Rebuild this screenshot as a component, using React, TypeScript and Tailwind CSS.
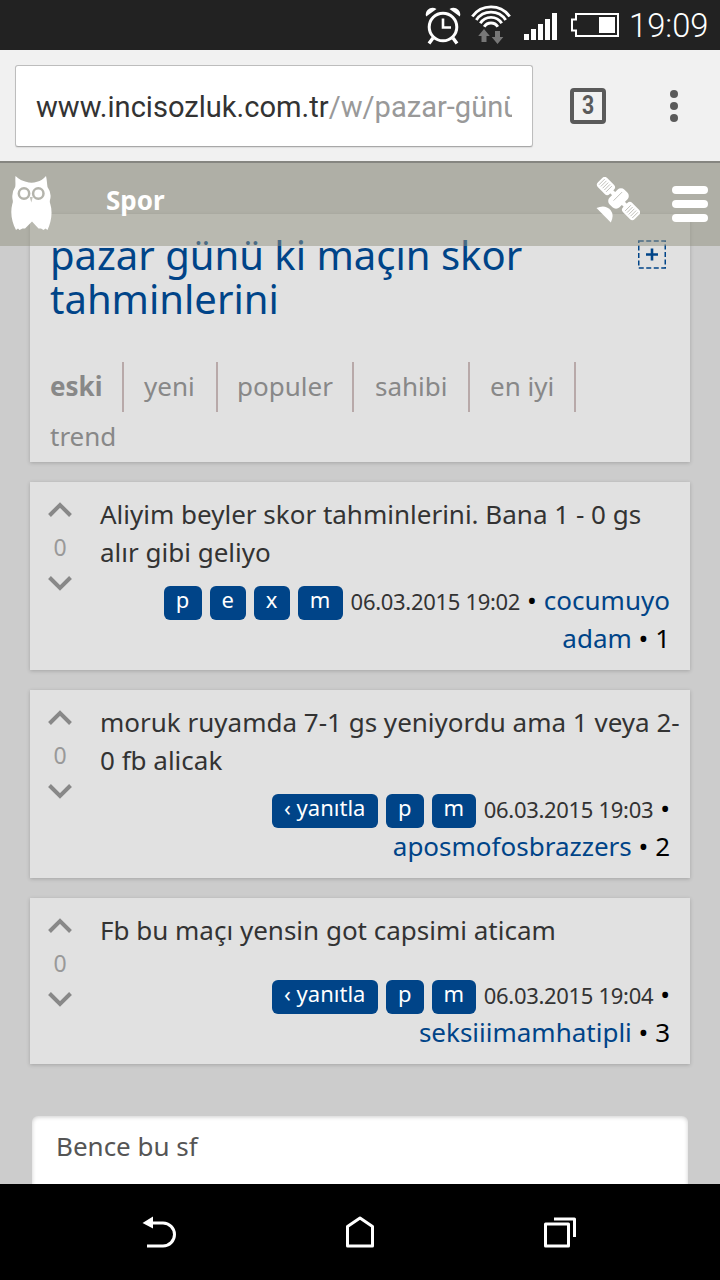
import { ReactNode } from "react";

type Entry = {
  id: number;
  text: ReactNode;
  buttons: { label: string; width: string }[];
  date: string;
  author: string[];
};

const tabs = [
  { label: "eski", style: "w-[74px] font-bold" },
  { label: "yeni", style: "w-[94px] pl-5" },
  { label: "populer", style: "w-[136px] pl-[19px]" },
  { label: "sahibi", style: "w-[116px] pl-[21px]" },
  { label: "en iyi", style: "w-[106px] pl-5" },
];

const entries: Entry[] = [
  {
    id: 1,
    text: (
      <>
        Aliyim beyler skor tahminlerini. Bana 1 - 0 gs
        <br />
        alır gibi geliyo
      </>
    ),
    buttons: [
      { label: "p", width: "w-[38px]" },
      { label: "e", width: "w-9" },
      { label: "x", width: "w-9" },
      { label: "m", width: "w-[45px]" },
    ],
    date: "06.03.2015 19:02",
    author: ["cocumuyo", "adam"],
  },
  {
    id: 2,
    text: (
      <>
        moruk ruyamda 7-1 gs yeniyordu ama 1 veya 2-
        <br />0 fb alicak
      </>
    ),
    buttons: [
      { label: "‹ yanıtla", width: "w-[106px]" },
      { label: "p", width: "w-[38px]" },
      { label: "m", width: "w-11" },
    ],
    date: "06.03.2015 19:03",
    author: ["", "aposmofosbrazzers"],
  },
  {
    id: 3,
    text: "Fb bu maçı yensin got capsimi aticam",
    buttons: [
      { label: "‹ yanıtla", width: "w-[106px]" },
      { label: "p", width: "w-[38px]" },
      { label: "m", width: "w-11" },
    ],
    date: "06.03.2015 19:04",
    author: ["", "seksiiimamhatipli"],
  },
];

function StatusBar() {
  return (
    <div className="flex h-[50px] shrink-0 bg-[#222] pl-[425px] text-white">
      <svg width="36" height="50" viewBox="0 0 36 50" fill="none" stroke="currentColor">
        <circle cx="18" cy="27" r="13.8" strokeWidth="3" />
        <path d="M18 18.5V27.5H26" strokeWidth="2.6" />
        <path d="M8 38L4 43.5M28 38L32 43.5" strokeWidth="3.4" />
        <path d="M1.2 16.5C-1 10.500 6 5 11.500 9Z" fill="currentColor" stroke="none" />
        <path d="M34.8 16.5C37 10.500 30 5 24.500 9Z" fill="currentColor" stroke="none" />
      </svg>
      <svg className="ml-[10px]" width="40" height="50" viewBox="0 0 40 50" fill="none" stroke="currentColor" strokeWidth="2.9">
        <path d="M1.3 16.5A23 23 0 0 1 38.7 16.5" />
        <path d="M5.3 20A17.7 17.7 0 0 1 34.7 20" />
        <path d="M9.3 23.3A12.6 12.6 0 0 1 30.7 23.3" />
        <path d="M13.2 26.8A8 8 0 0 1 26.8 26.8" />
        <path d="M13 29L18.8 36H15.5V42H10.5V36H7.2Z" fill="#777" stroke="none" />
        <path d="M26.5 44L32.3 37H29V31H24V37H20.7Z" fill="#777" stroke="none" />
      </svg>
      <svg className="ml-[13px]" width="33" height="50" viewBox="0 0 33 50" fill="currentColor">
        <path d="M0 34H5V40H0ZM7 29H12V40H7ZM14 24H19V40H14ZM21 19H26V40H21ZM28 13H33V40H28Z" />
      </svg>
      <svg className="ml-[14px]" width="48" height="50" viewBox="0 0 48 50" fill="none" stroke="currentColor" strokeWidth="2">
        <path d="M5 14H47V36H5V30.5H1V19.5H5Z" />
        <path d="M28 17H44V33H28Z" fill="currentColor" stroke="none" />
      </svg>
      <span className="ml-[10px] font-['Roboto',sans-serif] text-[32.7px] leading-[52px] font-light">19:09</span>
    </div>
  );
}

function AddressBar() {
  return (
    <div className="flex h-[113px] shrink-0 items-start border-b-2 border-[#858580] bg-[#f1f1f1] font-['Roboto',sans-serif]">
      <div className="mt-[15px] ml-[15px] h-[82px] w-[518px] rounded-[3px] border border-[#bdbdbd] border-b-[#a8a8a8] bg-white px-5 shadow-[0_1px_1px_#ddd]">
        <p className="w-[476px] overflow-hidden text-[29.1px] leading-[82px] whitespace-nowrap text-[#999]">
          <span className="text-[#333]">www.incisozluk.com.tr</span>/w/pazar-günü
        </p>
      </div>
      <div className="mt-[38px] ml-[37px] flex size-9 items-center justify-center rounded-[4px] border-4 border-[#5a5a5a] text-[25px] font-bold text-[#5a5a5a]">
        <span className="scale-x-85">3</span>
      </div>
      <div className="mt-10 ml-16 flex flex-col gap-1">
        <i className="size-2 rounded-full bg-[#5a5a5a]" />
        <i className="size-2 rounded-full bg-[#5a5a5a]" />
        <i className="size-2 rounded-full bg-[#5a5a5a]" />
      </div>
    </div>
  );
}

function Owl() {
  return (
    <svg width="42" height="56" viewBox="0 0 42 56" fill="#fff">
      <path d="M4.500 1C8 4.500 12 6 15 6.800Q20.500 8.500 26 6.800C29.500 6 32.500 4 35 1C36 5 36 9 36.500 12Q41 18 39 25Q38.500 27 39.300 29C42 38 40 47 36.500 55L34.500 53.500L32.500 55L30 53.500L27.500 53.500L21 46.500L14 53.500L11.500 53.500L8.500 55L7 53.500L5 55C.8 47 -1 38 1.300 29Q2.300 27 1.500 24Q.5 17 4.200 12C4.800 9 4 5 4.500 1Z" />
      <circle cx="13" cy="18.500" r="5.200" fill="none" stroke="#b4b4ac" strokeWidth="2.500" />
      <circle cx="27.300" cy="18.500" r="5.200" fill="none" stroke="#b4b4ac" strokeWidth="2.500" />
      <path d="M18.700 22H21.800L20.300 27.500Z" fill="#c4c4bd" />
    </svg>
  );
}

function Satellite() {
  return (
    <svg width="44" height="46" viewBox="0 0 44 46" fill="#fff">
      <g transform="translate(22.5 21.5) rotate(45)">
        <rect x="-26" y="-6.5" width="16.500" height="13" rx="3.500" />
        <rect x="9.500" y="-6.5" width="16.500" height="13" rx="3.500" />
        <rect x="-11" y="-2.200" width="22" height="4.400" />
        <rect x="-7" y="-10.500" width="14" height="21" rx="5" />
        <path
          d="M-23.500 -4V4M-21 -4V4M-18.500 -4V4M-16 -4V4M-13.500 -4V4M13.500 -4V4M16 -4V4M18.500 -4V4M21 -4V4M23.500 -4V4M-2 -7V5"
          fill="none"
          stroke="#b4b4ac"
          strokeWidth=".8"
        />
      </g>
      <path d="M.5 31Q9 27 14.500 33Q18.500 38 14.800 45.500Z" />
    </svg>
  );
}

function SiteHeader() {
  return (
    <header className="absolute inset-x-0 top-0 z-10 flex h-[83px] items-start bg-[#919180]/50 pt-3 pl-[11px]">
      <Owl />
      <h2 className="mt-[7px] ml-[53px] w-[490px] text-[26px] leading-9 font-bold text-white">Spor</h2>
      <div className="mt-[2px]">
        <Satellite />
      </div>
      <div className="mt-[11px] ml-8 flex flex-col gap-[6px]">
        <i className="h-2 w-9 rounded-full bg-white" />
        <i className="h-2 w-9 rounded-full bg-white" />
        <i className="h-2 w-9 rounded-full bg-white" />
      </div>
    </header>
  );
}

function Vote() {
  return (
    <div className="flex w-[60px] shrink-0 flex-col items-center pt-[7px] text-[#888]">
      <svg width="24" height="16" viewBox="0 0 24 16" fill="none" stroke="currentColor" strokeWidth="4">
        <path d="M1.500 13.500L12 3L22.500 13.500" />
      </svg>
      <span className="mt-3 mb-[11px] text-[23px] leading-[34px] text-[#999]">0</span>
      <svg width="24" height="16" viewBox="0 0 24 16" fill="none" stroke="currentColor" strokeWidth="4">
        <path d="M1.500 2.500L12 13L22.500 2.500" />
      </svg>
    </div>
  );
}

function EntryCard({ entry }: { entry: Entry }) {
  const [firstLine, secondLine] = entry.author;

  return (
    <article className="mb-5 flex bg-[#e1e1e1] py-[13px] shadow-[0_1px_4px_rgba(0,0,0,0.2)]">
      <Vote />
      <div className="flex-1 pl-[10px] text-[26px] leading-[38px]">
        <p className="min-h-[54px] whitespace-nowrap text-[#333]">{entry.text}</p>
        <div className="mt-[10px] flex h-[38px] items-start justify-end pr-5">
          <div className="mt-[5px] flex gap-2">
            {entry.buttons.map((button) => (
              <button
                key={button.label}
                className={`${button.width} h-[34px] rounded-md bg-[#048] pb-2 text-[22px] leading-[26px] whitespace-nowrap text-white`}
              >
                {button.label}
              </button>
            ))}
          </div>
          <span className="ml-2 text-[22px] leading-10 tracking-[-0.31px] text-[#333]">{entry.date}</span>
          <span className="ml-[7px] text-black">•</span>
          {firstLine && <a className="ml-[7px] text-[#048]">{firstLine}</a>}
        </div>
        <p className="pr-5 text-right text-black">
          <a className="text-[#048]">{secondLine}</a> • {entry.id}
        </p>
      </div>
    </article>
  );
}

function NavBar() {
  return (
    <nav className="flex h-24 shrink-0 items-center justify-between bg-black pr-36 pl-[142px] text-white">
      <svg width="36" height="34" viewBox="0 0 36 34" fill="none" stroke="currentColor" strokeWidth="3">
        <path d="M8 8H21A11.500 11.500 0 0 1 21 31H5" />
        <path d="M.5 8L11 1.500V13.500Z" fill="currentColor" stroke="none" />
      </svg>
      <svg width="30" height="34" viewBox="0 0 30 34" fill="none" stroke="currentColor" strokeWidth="3" strokeLinejoin="round">
        <path d="M2.500 11.500L15 3L27.500 11.500V31H2.500Z" />
      </svg>
      <svg width="34" height="34" viewBox="0 0 34 34" fill="none" stroke="currentColor" strokeWidth="3" strokeLinejoin="round">
        <path d="M3.500 9H26.500V31H3.500Z" />
        <path d="M12 4H32.500V22" />
      </svg>
    </nav>
  );
}

export default function App() {
  return (
    <div className="flex h-[1280px] w-[720px] flex-col overflow-hidden bg-[#ccc] font-['Noto_Sans',sans-serif]">
      <StatusBar />
      <AddressBar />
      <main className="relative min-h-0 flex-1 overflow-hidden px-[30px] pt-[51px]">
        <SiteHeader />
        <section className="mb-5 h-[248px] bg-[#e1e1e1] px-5 pt-[19px] shadow-[0_1px_4px_rgba(0,0,0,0.2)]">
          <div className="flex h-[129px] items-start justify-between">
            <h1 className="text-[40px] leading-11 whitespace-nowrap text-[#048]">
              pazar günü ki maçın skor
              <br />
              tahminlerini
            </h1>
            <svg className="mt-[7px] mr-1" width="28" height="29" viewBox="0 0 28 29" fill="none" stroke="#048">
              <rect x=".75" y="1" width="26.5" height="27" strokeWidth="1.5" strokeDasharray="5 2.5" />
              <path d="M14 8.5V20.5M8 14.5H20" strokeWidth="2.6" />
            </svg>
          </div>
          <div className="flex flex-wrap text-[26px] leading-[48px] text-[#888]">
            {tabs.map((tab) => (
              <a key={tab.label} className={`${tab.style} h-[50px] border-r-2 border-[#b8a9a9]`}>
                {tab.label}
              </a>
            ))}
            <a className="w-full">trend</a>
          </div>
        </section>
        {entries.map((entry) => (
          <EntryCard key={entry.id} entry={entry} />
        ))}
        <textarea
          className="mx-[2px] mt-[52px] block h-24 w-[656px] resize-none rounded-md bg-white px-6 pt-[11px] text-[26px] leading-[38px] text-[#555] shadow-[inset_0_1px_4px_rgba(0,0,0,0.2)] outline-none"
          defaultValue="Bence bu sf"
        />
      </main>
      <NavBar />
    </div>
  );
}
